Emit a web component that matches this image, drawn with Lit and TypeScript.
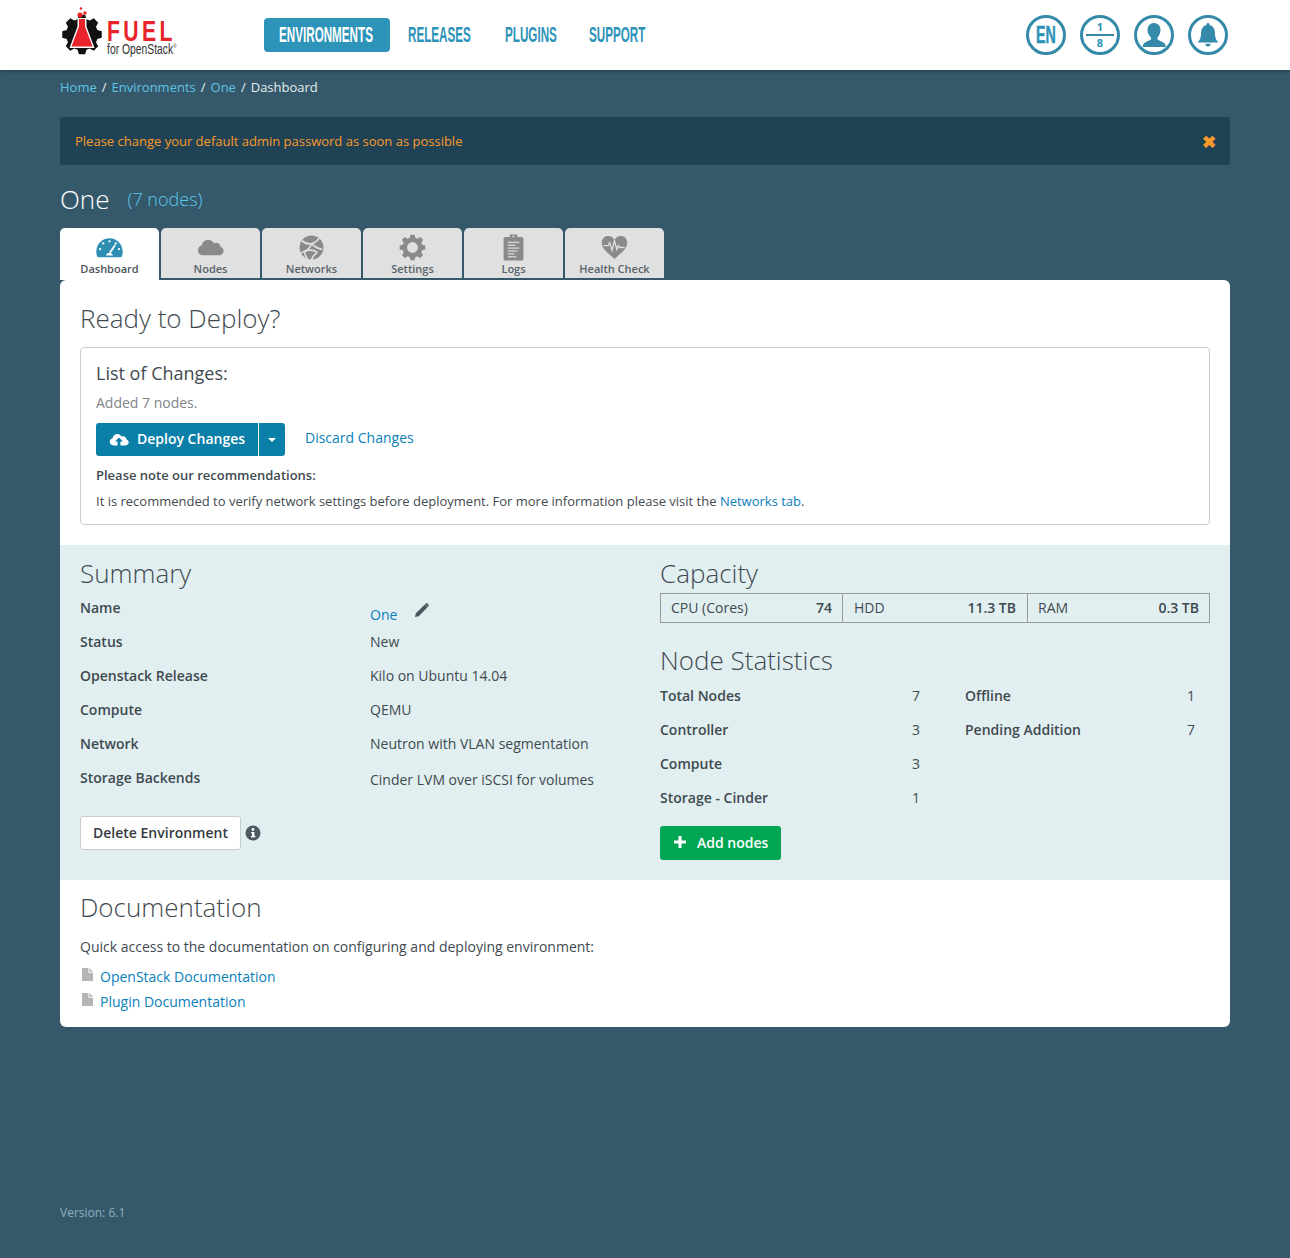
import { LitElement, html, css, svg } from 'lit'
import { customElement } from 'lit/decorators.js'

// builds a toothed gear outline, used by the logo and the settings tab
function gearPath(cx: number, cy: number, outer: number, inner: number, teeth: number) {
  const pts: string[] = []
  const step = (Math.PI * 2) / teeth
  for (let i = 0; i < teeth; i++) {
    const a = i * step - Math.PI / 2
    const spots = [
      [inner, a - step * 0.36],
      [outer, a - step * 0.2],
      [outer, a + step * 0.2],
      [inner, a + step * 0.36]
    ]
    for (const [r, t] of spots) {
      pts.push(`${(cx + r * Math.cos(t)).toFixed(2)} ${(cy + r * Math.sin(t)).toFixed(2)}`)
    }
  }
  return `M${pts.join('L')}Z`
}

const cloud = 'M6.5 20C3 20 1 17.6 1 15c0-2.5 1.7-4.5 4-5 .5-3.6 3.5-6 6.6-6 2.6 0 4.8 1.4 5.9 3.6 .7-.4 1.5-.6 2.3-.6 2.6 0 4.6 2 4.7 4.6 1.9.6 3.1 2.2 3.1 4.1 0 2.4-1.9 4.3-4.4 4.3z'

const tabIcons: Record<string, unknown> = {
  dashboard: svg`<svg class="tab-svg" viewBox="0 0 28 22">
    <path fill="#2e8fb3" d="M1.5 20.6C.7 19.6 .3 17.4 .3 15.2.3 7.6 6.4 1.4 14 1.4s13.7 6.2 13.7 13.8c0 2.2-.4 4.4-1.2 5.4-.3.4-.7.5-1.2.5H2.7c-.5 0-.9-.1-1.2-.5z"/>
    <g fill="#fff"><circle cx="14" cy="4.6" r="1.2"/><circle cx="7.5" cy="6.8" r="1.2"/><circle cx="20.5" cy="6.8" r="1.2"/><circle cx="4.2" cy="12.6" r="1.2"/><circle cx="23.8" cy="12.6" r="1.2"/>
    <path d="M19.2 7.8l1.3 1-5 8-1.9-1.2z"/><path d="M10.4 19.2c.5-1.8 1.8-2.8 3.6-2.8s3.1 1 3.6 2.8z"/></g>
  </svg>`,
  nodes: svg`<svg class="tab-svg" viewBox="0 0 28 22"><path fill="#8a8a8a" transform="translate(0 -1)" d="${cloud}"/></svg>`,
  networks: svg`<svg class="tab-svg" viewBox="0 0 28 26">
    <circle cx="14" cy="13" r="12.4" fill="#8a8a8a"/>
    <g fill="none" stroke="#e0e0e0" stroke-width="1.7">
      <path d="M4 6c4 3 6 4 10 3s7-4 8-6"/><path d="M14 9c-1 3-3 6-7 8s-5 2-6 2"/><path d="M14 9c3 3 6 5 11 6"/><path d="M7 17c5-2 9-2 13 1"/><path d="M20 18c-3 2-5 5-6 8"/><path d="M7 17c0 3 1 6 3 8"/>
    </g>
  </svg>`,
  settings: svg`<svg class="tab-svg" viewBox="0 0 28 28">
    <path fill="#8a8a8a" fill-rule="evenodd" d="${gearPath(14, 14, 13.5, 10.4, 8)}M14 8.4a5.6 5.6 0 1 0 0 11.2a5.6 5.6 0 1 0 0-11.2z"/>
  </svg>`,
  logs: svg`<svg class="tab-svg" viewBox="0 0 22 28">
    <path fill="#8a8a8a" d="M2.5 3H7V1.6C7 .9 7.6.5 8.200.5h5.600c.6 0 1.200.4 1.200 1.100V3h4.500c1 0 1.800.8 1.800 1.800v21c0 1-.8 1.700-1.800 1.700h-17c-1 0-1.800-.7-1.800-1.700v-21C.7 3.800 1.500 3 2.500 3z"/>
    <g fill="#e0e0e0"><circle cx="11" cy="2.600" r="1"/><rect x="5" y="8" width="12" height="1.200"/><rect x="5" y="11" width="8" height="1.200"/><rect x="5" y="14" width="12" height="1.200"/><rect x="5" y="17" width="10" height="1.200"/><rect x="5" y="20" width="7" height="1.200"/><rect x="5" y="23" width="9" height="1.200"/></g>
  </svg>`,
  health: svg`<svg class="tab-svg" viewBox="0 0 28 26">
    <path fill="#8a8a8a" d="M14 25C9 20 .8 15 .8 8 .8 3.800 3.800 1 7.400 1 10.200 1 12.600 2.600 14 5c1.400-2.400 3.800-4 6.600-4 3.600 0 6.600 2.800 6.600 7 0 7-8.200 12-13.200 17z"/>
    <path fill="none" stroke="#e0e0e0" stroke-width="1.300" d="M2.500 11h5l1.500-3 2.500 8 2.500-10 2.500 9 1.500-4 1.500 2h5"/>
  </svg>`
}

const tabs = [
  { key: 'dashboard', label: 'Dashboard' },
  { key: 'nodes', label: 'Nodes' },
  { key: 'networks', label: 'Networks' },
  { key: 'settings', label: 'Settings' },
  { key: 'logs', label: 'Logs' },
  { key: 'health', label: 'Health Check' }
]

const summary = [
  ['Name', 'One'],
  ['Status', 'New'],
  ['Openstack Release', 'Kilo on Ubuntu 14.04'],
  ['Compute', 'QEMU'],
  ['Network', 'Neutron with VLAN segmentation'],
  ['Storage Backends', 'Cinder LVM over iSCSI for volumes']
]

const statsLeft = [
  ['Total Nodes', '7'],
  ['Controller', '3'],
  ['Compute', '3'],
  ['Storage - Cinder', '1']
]

const statsRight = [
  ['Offline', '1'],
  ['Pending Addition', '7']
]

const fileIcon = html`<svg class="file" viewBox="0 0 12 14"><path fill="#b5b5b5" d="M0 0h7v5h5v9H0z"/><path fill="#b5b5b5" d="M8 0l4 4H8z"/></svg>`

@customElement('app-root')
export class AppRoot extends LitElement {
  static styles = css`
    :host {
      display: block;
      min-height: 1258px;
      background: #35596a;
      font-family: 'Open Sans', sans-serif;
      font-size: 14px;
      color: #3f4a50;
    }
    a { color: #0a80bb; text-decoration: none; }

    .top {
      height: 70px;
      background: #fff;
      box-shadow: 0 1px 4px rgba(0, 0, 0, 0.35);
      display: flex;
      align-items: center;
      padding: 0 62px;
      position: relative;
    }
    .logo { width: 120px; height: 52px; margin-top: -8px; display: flex; gap: 3px; flex: none; }
    .logo svg { width: 42px; height: 52px; flex: none; }
    .logo-text { display: flex; flex-direction: column; padding-top: 14px; }
    .fuel {
      font: 700 29px/24px 'Liberation Sans', sans-serif;
      letter-spacing: 4.6px;
      color: #e8232a;
      transform: scaleX(0.73);
      transform-origin: left center;
    }
    .openstack {
      font: 400 14px/13px 'Liberation Sans', sans-serif;
      color: #333;
      white-space: nowrap;
      transform: scaleX(0.74);
      transform-origin: left center;
    }
    .openstack sup { font-size: 6px; line-height: 0; }
    .nav { display: flex; align-items: center; margin-left: 82px; }
    .nav a {
      font: 700 22px/34px 'Liberation Sans', sans-serif;
      color: #2e93b8;
      display: block;
      height: 34px;
      white-space: nowrap;
    }
    .nav a span { display: inline-block; transform: scaleX(0.53); transform-origin: left center; }
    .nav a.active { background: #2e93b8; color: #fff; border-radius: 4px; padding: 0 15px; width: 96px; margin-right: 18px; }
    .nav a.releases { width: 63px; margin-right: 34px; }
    .nav a.plugins { width: 51px; margin-right: 33px; }
    .nav a.support { width: 56px; }
    .circles { margin-left: auto; display: flex; gap: 14px; }
    .circle {
      width: 40px;
      height: 40px;
      box-sizing: border-box;
      border: 3px solid #368aa9;
      border-radius: 50%;
      display: flex;
      align-items: center;
      justify-content: center;
      overflow: hidden;
      color: #2e93b8;
    }
    .circle.lang { font: 700 23px/1 'Liberation Sans', sans-serif; }
    .circle.lang span { display: inline-block; transform: scaleX(0.62); -webkit-text-stroke: 0.5px #2e93b8; }
    .circle svg { width: 34px; height: 34px; }
    .circle svg.bell { width: 30px; height: 30px; }
    .fraction { flex-direction: column; font: 700 11px/12px 'Open Sans', sans-serif; }
    .fraction i { display: block; width: 28px; height: 2px; background: #368aa9; margin: 1px 0; flex: none; }

    .page { padding: 0 60px; }
    .crumbs { font-size: 13px; line-height: 18px; padding-top: 8px; color: #e3edf0; display: flex; gap: 5px; }
    .crumbs a { color: #5fc3e6; }
    .alert {
      margin-top: 21px;
      height: 48px;
      background: #1f4254;
      border-radius: 3px;
      color: #fb9a2a;
      font-size: 13px;
      display: flex;
      align-items: center;
      justify-content: space-between;
      padding: 0 14px 0 15px;
    }
    .alert b { font-size: 17px; font-weight: 700; line-height: 1; margin-top: 1px; }
    .title { display: flex; align-items: center; margin-top: 16px; height: 36px; color: #fff; font-size: 26px; font-weight: 300; line-height: 36px; gap: 18px; }
    .title span { color: #5cc8ee; font-size: 18px; }

    .tabs { display: flex; gap: 2px; margin-top: 11px; height: 50px; }
    .tab {
      flex: none;
      width: 99px;
      box-sizing: border-box;
      background: #e0e0e0;
      border-radius: 5px 5px 0 0;
      display: flex;
      flex-direction: column;
      align-items: center;
      justify-content: flex-end;
      font-size: 11px;
      font-weight: 600;
      line-height: 14px;
      color: #59636a;
      padding-bottom: 2px;
      height: 50px;
    }
    .tab.on { background: #fff; color: #4a5459; height: 52px; padding-bottom: 4px; position: relative; }
    .tab-svg { width: 27px; height: 27px; display: block; margin-bottom: 1px; }

    .panel { margin-top: 2px; background: #fff; border-radius: 6px; overflow: hidden; color: #3f4a50; }
    h2 { margin: 0; font-size: 26px; font-weight: 300; line-height: 36px; color: #3f4a50; }
    .deploy { padding: 20px 20px 20px; }
    .changes { border: 1px solid #ccc; border-radius: 4px; margin-top: 11px; padding: 12px 15px 14px; height: 178px; box-sizing: border-box; }
    .changes h3 { margin: 0; font-size: 18px; font-weight: 400; line-height: 26px; color: #3f4a50; }
    .added { color: #7f8589; line-height: 20px; margin-top: 7px; }
    .actions { display: flex; align-items: center; margin-top: 10px; height: 33px; }
    .btn-main, .btn-caret {
      background: #0a7fa8;
      color: #fff;
      height: 33px;
      display: flex;
      align-items: center;
      font-weight: 600;
      box-sizing: border-box;
    }
    .btn-main { width: 163px; border-radius: 3px 0 0 3px; padding: 0 0 2px 13px; gap: 8px; border-right: 1px solid #fff; }
    .btn-main svg { width: 20px; height: 16px; }
    .btn-caret { width: 26px; border-radius: 0 3px 3px 0; justify-content: center; }
    .btn-caret i { border: 4px solid transparent; border-top-color: #fff; border-bottom: 0; }
    .discard { margin-left: 20px; margin-top: -5px; }
    .note { font-size: 13px; font-weight: 600; line-height: 18px; margin-top: 10px; }
    .rec { font-size: 13px; line-height: 18px; margin-top: 8px; }

    .info { background: #e2eff1; display: grid; grid-template-columns: 580px 550px; padding: 10px 20px 20px; height: 335px; box-sizing: border-box; }
    .row { display: grid; grid-template-columns: 290px 1fr; height: 34px; align-items: center; }
    .row b, .stat b { font-weight: 600; }
    .sum-rows { margin-top: -1px; }
    .val-one { display: flex; align-items: center; gap: 17px; margin-top: 14px; }
    .val-low { margin-top: 4px; }
    .pencil { width: 15px; height: 15px; margin-top: -7px; }
    .btn-delete {
      border: 1px solid #ccc;
      border-radius: 3px;
      background: #fff;
      height: 34px;
      width: 161px;
      box-sizing: border-box;
      font-weight: 600;
      color: #333a3f;
      display: flex;
      align-items: center;
      justify-content: center;
      padding-bottom: 2px;
    }
    .del-row { display: flex; align-items: center; gap: 4px; margin-top: 22px; }
    .del-row svg { width: 16px; height: 16px; }
    .capacity { display: grid; grid-template-columns: 181px 185px 182px; border: 1px solid #999; height: 30px; box-sizing: border-box; margin-top: 2px; }
    .cap { display: flex; justify-content: space-between; align-items: center; padding: 0 10px 2px; border-left: 1px solid #999; }
    .cap:first-child { border-left: 0; }
    .cap:nth-child(2) { padding-left: 11px; padding-right: 11px; }
    .cap b { font-weight: 600; }
    .node-h { margin-top: 19px; }
    .stats { display: grid; grid-template-columns: 305px 1fr; }
    .stat { display: flex; justify-content: space-between; height: 34px; align-items: center; }
    .stats > div:first-child .stat { width: 260px; }
    .stats > div:last-child .stat { width: 230px; }
    .btn-add {
      background: #00a651;
      color: #fff;
      border-radius: 3px;
      height: 34px;
      width: 121px;
      display: flex;
      align-items: center;
      font-weight: 600;
      gap: 10px;
      padding: 0 0 2px 13px;
      box-sizing: border-box;
      margin-top: 12px;
    }
    .btn-add svg { width: 14px; height: 14px; }

    .docs { padding: 9px 20px 13px; }
    .docs p { margin: 12px 0 0; line-height: 20px; }
    .doc-link { display: flex; align-items: center; gap: 7px; height: 25px; }
    .doc-list { margin-top: 7px; }
    .file { width: 11px; height: 13px; margin-top: -4px; margin-left: 2px; }

    .version { margin-top: 178px; font-size: 12px; line-height: 16px; color: #8fb0bf; }
  `

  render() {
    return html`
      <div class="top">
        <div class="logo">
          <svg viewBox="0 0 42 52">
            <path fill="#111" d="${gearPath(20, 29.5, 20, 16, 8)}"/>
            <path fill="#fff" d="M15.500 13h9v8.500l8 21.500H7.500l8-21.500z"/>
            <path fill="#e8232a" d="M17 14h6v7.500l7.500 20H9.500l7.500-20z"/>
            <circle cx="18" cy="10" r="2.600" fill="#e8232a"/>
            <circle cx="23" cy="8" r="1.700" fill="#e8232a"/>
            <circle cx="19" cy="3.500" r="1.200" fill="#e8232a"/>
          </svg>
          <div class="logo-text">
            <div class="fuel">FUEL</div>
            <div class="openstack">for OpenStack<sup>®</sup></div>
          </div>
        </div>
        <nav class="nav">
          <a class="active"><span>ENVIRONMENTS</span></a>
          <a class="releases"><span>RELEASES</span></a>
          <a class="plugins"><span>PLUGINS</span></a>
          <a class="support"><span>SUPPORT</span></a>
        </nav>
        <div class="circles">
          <div class="circle lang"><span>EN</span></div>
          <div class="circle fraction"><span>1</span><i></i><span>8</span></div>
          <div class="circle">
            <svg viewBox="0 0 34 34"><path fill="#368aa9" d="M17 5c4 0 6.500 3 6.500 7 0 3-1.200 5.500-2.700 7.200-.5.6-.5 2 .2 2.600 2 1.700 6.500 2.200 7.500 5.200.3.900.3 1.500.3 2H5.700c0-.5 0-1.100.3-2 1-3 5.500-3.500 7.500-5.200.7-.6.7-2 .2-2.600C12 17.500 10.500 15 10.500 12c0-4 2.500-7 6.500-7z"/></svg>
          </div>
          <div class="circle">
            <svg class="bell" viewBox="0 0 34 34"><path fill="#368aa9" d="M17 3.500c1 0 1.800.8 1.800 1.700v.5c3.800 1 6 4.200 6 8.300 0 5.500 1 8.500 4 11.500H5.200c3-3 4-6 4-11.500 0-4.100 2.200-7.300 6-8.300v-.5c0-.9.8-1.700 1.800-1.700zM14 27h6c0 1.700-1.300 3-3 3s-3-1.300-3-3z"/></svg>
          </div>
        </div>
      </div>

      <div class="page">
        <div class="crumbs">
          <a>Home</a><span>/</span><a>Environments</a><span>/</span><a>One</a><span>/</span><span>Dashboard</span>
        </div>
        <div class="alert">
          <span>Please change your default admin password as soon as possible</span>
          <b>✖</b>
        </div>
        <div class="title">One <span>(7 nodes)</span></div>

        <div class="tabs">
          ${tabs.map(
            (t, i) => html`
              <div class="tab ${i === 0 ? 'on' : ''}">
                ${tabIcons[t.key]}
                <span>${t.label}</span>
              </div>
            `
          )}
        </div>

        <div class="panel">
          <section class="deploy">
            <h2>Ready to Deploy?</h2>
            <div class="changes">
              <h3>List of Changes:</h3>
              <div class="added">Added 7 nodes.</div>
              <div class="actions">
                <div class="btn-main">
                  <svg viewBox="0 0 28 22"><path fill="#fff" fill-rule="evenodd" d="${cloud}M14 9l-5.500 5.500h3.500V20h4v-5.500h3.500z"/></svg>
                  Deploy Changes
                </div>
                <div class="btn-caret"><i></i></div>
                <a class="discard">Discard Changes</a>
              </div>
              <div class="note">Please note our recommendations:</div>
              <div class="rec">It is recommended to verify network settings before deployment. For more information please visit the <a>Networks tab</a>.</div>
            </div>
          </section>

          <section class="info">
            <div>
              <h2>Summary</h2>
              <div class="sum-rows">
                ${summary.map(
                  ([k, v], i) => html`
                    <div class="row">
                      <b>${k}</b>
                      ${i === 0
                        ? html`<div class="val-one"><a>${v}</a>
                            <svg class="pencil" viewBox="0 0 16 16"><path fill="#4a555b" d="M11.500 1.500l3 3L5 14l-4 1 1-4zM12.500.5c.5-.5 1.200-.5 1.700 0l1.300 1.300c.5.500.5 1.200 0 1.700l-.7.700-3-3z"/></svg></div>`
                        : html`<div class="${i === 5 ? 'val-low' : ''}">${v}</div>`}
                    </div>
                  `
                )}
              </div>
              <div class="del-row">
                <div class="btn-delete">Delete Environment</div>
                <svg viewBox="0 0 16 16"><circle cx="8" cy="8" r="7.500" fill="#4d5a61"/><rect x="7" y="7" width="2.400" height="5" fill="#fff"/><rect x="6" y="11" width="4.400" height="1.400" fill="#fff"/><rect x="6" y="7" width="2" height="1.200" fill="#fff"/><circle cx="8" cy="4.500" r="1.400" fill="#fff"/></svg>
              </div>
            </div>
            <div>
              <h2>Capacity</h2>
              <div class="capacity">
                <div class="cap"><span>CPU (Cores)</span><b>74</b></div>
                <div class="cap"><span>HDD</span><b>11.3 TB</b></div>
                <div class="cap"><span>RAM</span><b>0.3 TB</b></div>
              </div>
              <h2 class="node-h">Node Statistics</h2>
              <div class="stats">
                <div>
                  ${statsLeft.map(([k, v]) => html`<div class="stat"><b>${k}</b><span>${v}</span></div>`)}
                </div>
                <div>
                  ${statsRight.map(([k, v]) => html`<div class="stat"><b>${k}</b><span>${v}</span></div>`)}
                </div>
              </div>
              <div class="btn-add">
                <svg viewBox="0 0 14 14"><path fill="#fff" d="M5.500 1h3v4.500H13v3H8.500V13h-3V8.500H1v-3h4.500z"/></svg>
                Add nodes
              </div>
            </div>
          </section>

          <section class="docs">
            <h2>Documentation</h2>
            <p>Quick access to the documentation on configuring and deploying environment:</p>
            <div class="doc-list">
              <div class="doc-link">${fileIcon}<a>OpenStack Documentation</a></div>
              <div class="doc-link">${fileIcon}<a>Plugin Documentation</a></div>
            </div>
          </section>
        </div>

        <div class="version">Version: 6.1</div>
      </div>
    `
  }
}
